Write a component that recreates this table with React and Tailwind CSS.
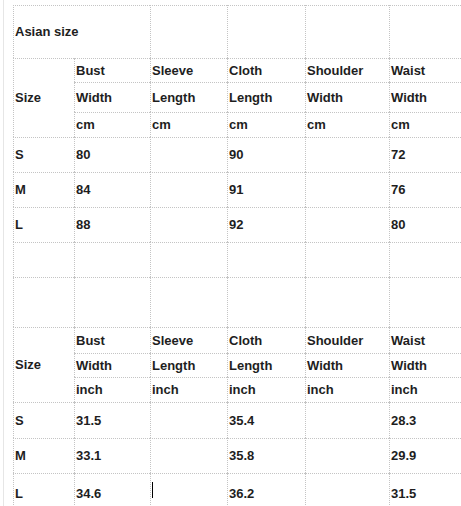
import React from "react";

const cell = "border-l border-t border-dotted border-[#c4c4c4] flex items-center pl-[1px] whitespace-nowrap";

function Block({ unit, rows }) {
  const hdr = [
    ["Bust", "Width"],
    ["Sleeve", "Length"],
    ["Cloth", "Length"],
    ["Shoulder", "Width"],
    ["Waist", "Width"],
  ];
  return (
    <>
      <div className={cell + " row-span-3"}>Size</div>
      {hdr.map((h) => (
        <div key={h[0]} className={cell}>{h[0]}</div>
      ))}
      {hdr.map((h, i) => (
        <div key={h[0] + i} className={cell}>{h[1]}</div>
      ))}
      {hdr.map((h, i) => (
        <div key={"u" + i} className={cell}>{unit}</div>
      ))}
      {rows.map((r, ri) => (
        <React.Fragment key={ri}>
          {r.map((v, ci) => (
            <div key={ci} className={cell + " relative"}>
              {v}
              {r.cursor && ci === 2 ? (
                <span className="absolute left-[1px] top-[8px] w-[1px] h-[16px] bg-black"></span>
              ) : null}
            </div>
          ))}
        </React.Fragment>
      ))}
    </>
  );
}

export default function App() {
  const cmRows = [
    ["S", "80", "", "90", "", "72"],
    ["M", "84", "", "91", "", "76"],
    ["L", "88", "", "92", "", "80"],
  ];
  const inRows = [
    ["S", "31.5", "", "35.4", "", "28.3"],
    ["M", "33.1", "", "35.8", "", "29.9"],
    ["L", "34.6", "", "36.2", "", "31.5"],
  ];
  inRows[2].cursor = true;
  return (
    <div className="w-[461px] h-[506px] overflow-hidden bg-white relative">
      <div className="ml-[3px] h-[506px] border-l border-[#e6e6e6] pl-[9px] pt-[5px]">
        <div
          className="grid grid-cols-[61px_76px_77px_78px_84px_90px] grid-rows-[53px_24px_30px_25px_35px_35px_35px_35px_50px_26px_24px_25px_36px_35px_40px] text-[13px] font-bold text-[#1e1e1e] w-[466px]"
          style={{ fontFamily: '"Liberation Sans", Arial, sans-serif' }}
        >
          <div className={cell + " col-span-2"}>Asian size</div>
          <div className={cell}></div>
          <div className={cell}></div>
          <div className={cell}></div>
          <div className={cell}></div>
          <Block unit="cm" rows={cmRows} />
          {[0, 1].map((r) =>
            [0, 1, 2, 3, 4, 5].map((c) => <div key={r + "-" + c} className={cell}></div>)
          )}
          <Block unit="inch" rows={inRows} />
        </div>
      </div>
    </div>
  );
}
